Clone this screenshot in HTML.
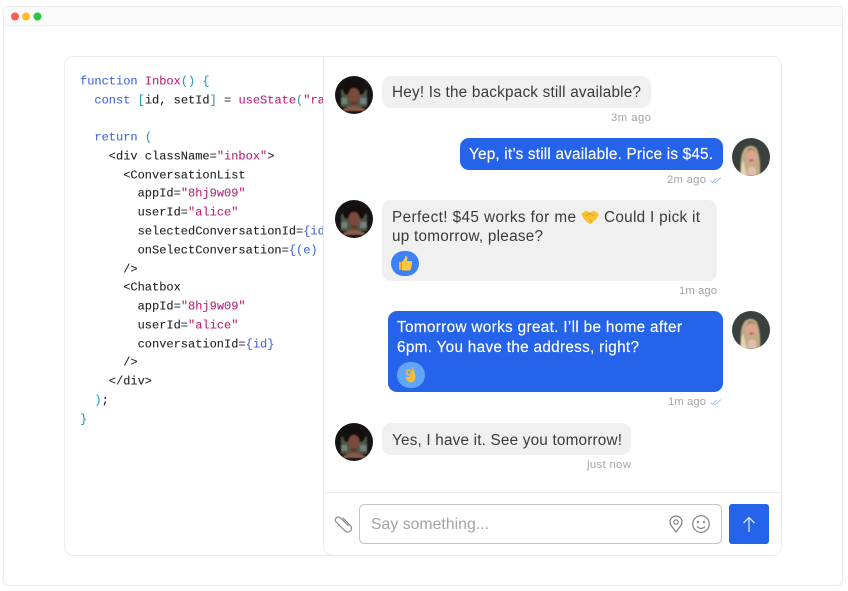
<!DOCTYPE html>
<html><head><meta charset="utf-8"><style>
html,body{margin:0;padding:0;background:#fff;width:848px;height:591px;overflow:hidden}
svg{display:block}
.c{font-family:"Liberation Mono",monospace;font-size:12px;fill:#1f2328;stroke:#1f2328;stroke-width:.12;white-space:pre}
.k{fill:#4a68e0;stroke:#4a68e0}.f{fill:#b8277a;stroke:#b8277a}.p{fill:#2b9fb8;stroke:#2b9fb8}.b{fill:#4a68d8;stroke:#4a68d8}
.s{font-family:"Liberation Sans",sans-serif;font-size:15.300px;fill:#3a3a3a}
.w{font-family:"Liberation Sans",sans-serif;font-size:15.300px;fill:#fff;stroke:#fff;stroke-width:.15}
.t{font-family:"Liberation Sans",sans-serif;font-size:11.300px;fill:#a3a3a3}
</style></head><body>
<svg width="848" height="591" viewBox="0 0 848 591" xmlns="http://www.w3.org/2000/svg">
<defs>
<filter id="bl" x="-20%" y="-20%" width="140%" height="140%"><feGaussianBlur stdDeviation="0.7"/></filter>
<clipPath id="av"><circle cx="0" cy="0" r="19"/></clipPath>
<g id="a1"><g clip-path="url(#av)"><rect x="-19" y="-19" width="38" height="38" fill="#141414"/>
<g filter="url(#bl)"><rect x="-13" y="-5" width="26" height="17" fill="#4d5548"/>
<rect x="6" y="3" width="7" height="6" fill="#727f7a"/><rect x="-13" y="3" width="6" height="6" fill="#76816f"/>
<ellipse cx="0" cy="-9" rx="11" ry="6.500" fill="#15100e"/><ellipse cx="-7" cy="-5" rx="4" ry="5" fill="#15100e"/><ellipse cx="7" cy="-5" rx="4" ry="5" fill="#15100e"/>
<ellipse cx="0" cy="0" rx="5.500" ry="7" fill="#7a4c3a"/><rect x="-3" y="6" width="6" height="4" fill="#633a28"/>
<path d="M-11 14 Q0 8 11 14 V16 H-11Z" fill="#8a5a48"/></g></g></g>
<g id="a2"><g clip-path="url(#av)"><rect x="-19" y="-19" width="38" height="38" fill="#39403d"/>
<g filter="url(#bl)"><path d="M-10 19 Q-12 -2 -6 -9 Q1 -14 6 -8 Q10 2 9 19Z" fill="#c2ab84"/>
<path d="M-11 19 Q-10 8 -8 3 L-4 19Z" fill="#e4d4b4"/>
<ellipse cx="0.500" cy="0" rx="5" ry="7" fill="#dca48f"/><path d="M-5 -3 Q-1 -10 6 -5 Q3 -9 -2 -9Z" fill="#8f7654"/>
<ellipse cx="0.500" cy="3.500" rx="2.300" ry="1.100" fill="#b85560"/><path d="M-3 11 Q1 8 5 11 V19 H-3Z" fill="#dcc0ac"/></g></g></g>
<path id="chk" d="M0 3 L2 5 L6 0.500 M3.500 5 L5 5 L10.500 0" fill="none" stroke="#8fb0ee" stroke-width=".8"/>
</defs>

<rect width="848" height="591" fill="#fff"/>
<rect x="3.500" y="6.500" width="839" height="579" rx="5" fill="#fff" stroke="#eaeaea"/>
<path d="M4 25 V11 a4 4 0 0 1 4-4 H838 a4 4 0 0 1 4 4 V25Z" fill="#fafafa"/>
<line x1="4" y1="25.500" x2="842" y2="25.500" stroke="#efefef"/>
<circle cx="15" cy="16.500" r="4" fill="#fb5a57"/><circle cx="26" cy="16.500" r="4" fill="#fdbb2e"/><circle cx="37.500" cy="16.500" r="4" fill="#28c840"/>

<rect x="64.500" y="56.500" width="717" height="499" rx="9" fill="#fff" stroke="#ebebeb"/>

<g transform="translate(0 .6)">
<text x="80" y="84" class="c" xml:space="preserve"><tspan class="k">function</tspan> <tspan class="f">Inbox</tspan><tspan class="p">() {</tspan></text>
<text x="94.400" y="103" class="c" xml:space="preserve"><tspan class="k">const</tspan> <tspan class="p">[</tspan>id, setId<tspan class="p">]</tspan> = <tspan class="f">useState</tspan><tspan class="p">(</tspan><tspan class="f">"rad"</tspan></text>
<text x="94.400" y="140" class="c" xml:space="preserve"><tspan class="k">return</tspan> <tspan class="p">(</tspan></text>
<text x="108.800" y="159" class="c" xml:space="preserve">&lt;div className=<tspan class="f">"inbox"</tspan>&gt;</text>
<text x="123.200" y="178" class="c" xml:space="preserve">&lt;ConversationList</text>
<text x="137.600" y="196" class="c" xml:space="preserve">appId=<tspan class="f">"8hj9w09"</tspan></text>
<text x="137.600" y="215" class="c" xml:space="preserve">userId=<tspan class="f">"alice"</tspan></text>
<text x="137.600" y="234" class="c" xml:space="preserve">selectedConversationId=<tspan class="b">{id}</tspan></text>
<text x="137.600" y="253" class="c" xml:space="preserve">onSelectConversation=<tspan class="b">{(e)</tspan></text>
<text x="123.200" y="272" class="c" xml:space="preserve">/&gt;</text>
<text x="123.200" y="290" class="c" xml:space="preserve">&lt;Chatbox</text>
<text x="137.600" y="309" class="c" xml:space="preserve">appId=<tspan class="f">"8hj9w09"</tspan></text>
<text x="137.600" y="328" class="c" xml:space="preserve">userId=<tspan class="f">"alice"</tspan></text>
<text x="137.600" y="347" class="c" xml:space="preserve">conversationId=<tspan class="b">{id}</tspan></text>
<text x="123.200" y="365" class="c" xml:space="preserve">/&gt;</text>
<text x="108.800" y="384" class="c" xml:space="preserve">&lt;/div&gt;</text>
<text x="94.400" y="403" class="c" xml:space="preserve"><tspan class="p">)</tspan>;</text>
<text x="80" y="422" class="c" xml:space="preserve"><tspan class="p">}</tspan></text>
</g>

<path d="M323.500 57 H773 a8 8 0 0 1 8 8 V547 a8 8 0 0 1 -8 8 H333 a9.500 9.500 0 0 1 -9.500 -9.500Z" fill="#fff"/>
<path d="M323.500 57 V545.500 a10 10 0 0 0 10 10" fill="none" stroke="#ebebeb"/>
<line x1="324" y1="492.500" x2="781" y2="492.500" stroke="#ebebeb"/>

<use href="#a1" x="354" y="95"/><use href="#a2" x="751" y="157"/><use href="#a1" x="354" y="219"/><use href="#a2" x="751" y="330"/><use href="#a1" x="354" y="442"/>

<rect x="382" y="76" width="269" height="32" rx="9" fill="#f0f0f0"/>
<text class="s" x="392" y="97" textLength="249">Hey! Is the backpack still available?</text>
<text class="t" x="611" y="121" textLength="40">3m ago</text>

<rect x="460" y="138" width="263" height="32" rx="9" fill="#2563eb"/>
<text class="w" x="469" y="159" textLength="244">Yep, it’s still available. Price is $45.</text>
<text class="t" x="667" y="183" textLength="39">2m ago</text>
<use href="#chk" x="710.500" y="177.500"/>

<rect x="382" y="200" width="335" height="81" rx="9" fill="#f0f0f0"/>
<text class="s" x="392" y="222" textLength="184">Perfect! $45 works for me</text>
<path d="M581 214 L586 210.500 L590 212.500 L594 210.500 L599 214 L597 218 L591 224 L588 223 L584 219Z" fill="#f7c334"/>
<path d="M586 216 L590 213 L594 216 M589 219 L592 222" fill="none" stroke="#d99a1c" stroke-width=".8"/>
<text class="s" x="604" y="222" textLength="96">Could I pick it</text>
<text class="s" x="392" y="241" textLength="151">up tomorrow, please?</text>
<rect x="391" y="251" width="28" height="25" rx="12.500" fill="#3b82f6"/>
<path d="M399 262 h2.500 v8 h-2.500Z" fill="#f2b632"/>
<path d="M402 262 L405 258 Q405 255 406.500 256 Q408 257 407 261 H411.500 Q412.500 262 412 263.500 L411 269 Q410.500 270.500 409 270.500 H402Z" fill="#fbc83c"/>
<text class="t" x="679" y="294" textLength="38">1m ago</text>

<rect x="388" y="311" width="335" height="81" rx="9" fill="#2563eb"/>
<text class="w" x="397" y="332" textLength="285">Tomorrow works great. I’ll be home after</text>
<text class="w" x="397" y="352" textLength="242">6pm. You have the address, right?</text>
<rect x="397" y="362" width="28" height="26" rx="13" fill="#60a5fa"/>
<circle cx="409" cy="372.500" r="2.500" fill="none" stroke="#f7bd33" stroke-width="1.500"/>
<path d="M406 377 Q406 382 411 382.500 Q416 382 415.500 376 L413.500 369 L412.500 366 L412 372.500 L409.500 377Z" fill="#f7bd33"/>
<text class="t" x="668" y="405" textLength="38">1m ago</text>
<use href="#chk" x="710.500" y="399.500"/>

<rect x="382" y="423" width="249" height="32" rx="9" fill="#f0f0f0"/>
<text class="s" x="392" y="445" textLength="230">Yes, I have it. See you tomorrow!</text>
<text class="t" x="587" y="468" textLength="44">just now</text>

<rect x="359.500" y="504.500" width="362" height="39" rx="5" fill="#fff" stroke="#c4c4c4"/>
<text x="371" y="529" textLength="118" style="font-family:'Liberation Sans',sans-serif;font-size:15.800px;fill:#a3a3a3">Say something...</text>

<g transform="translate(343.500 524) rotate(45)" fill="none" stroke="#8a8a8a" stroke-width="1.200">
<path d="M-5 -3.800 H6 a3.800 3.800 0 0 1 0 7.600 H-6.500 a3 3 0 0 1 0 -6 H5"/>
</g>

<path d="M676 532 L671.500 526 A6 6 0 1 1 680.500 526Z" fill="none" stroke="#808080" stroke-width="1.200" stroke-linejoin="round"/>
<circle cx="676" cy="522" r="2.200" fill="none" stroke="#808080" stroke-width="1.200"/>

<circle cx="701" cy="524" r="8.300" fill="none" stroke="#808080" stroke-width="1.200"/>
<circle cx="698" cy="522" r="1" fill="#707070"/><circle cx="704" cy="522" r="1" fill="#707070"/>
<path d="M697 526.500 Q701 530.500 705 526.500" fill="none" stroke="#808080" stroke-width="1.200"/>

<rect x="729" y="504" width="40" height="40" rx="3" fill="#2563eb"/>
<path d="M749 532 V517.500 M743.500 523 L749 517.500 L754.500 523" fill="none" stroke="#dbe7fd" stroke-width="1.300"/>
</svg>
</body></html>
